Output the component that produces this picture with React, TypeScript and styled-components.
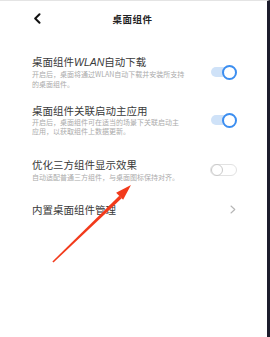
import React from 'react';
import styled, { createGlobalStyle } from 'styled-components';

const GlobalStyle = createGlobalStyle`
  html, body {
    margin: 0;
    padding: 0;
    background: #ffffff;
  }
  body {
    font-family: "Noto Sans CJK SC", "Noto Sans", sans-serif;
  }
`;

const Page = styled.div`
  position: relative;
  width: 270px;
  height: 337px;
  box-sizing: border-box;
  border-top: 1px solid #e4e4e4;
  border-right: 3px solid #1c1c2c;
  background: #fff;
  overflow: hidden;
`;

const Header = styled.div`
  display: flex;
  align-items: center;
  justify-content: center;
  position: relative;
  height: 35px;
`;

const BackButton = styled.div`
  position: absolute;
  left: 33px;
  top: 12px;
  width: 9px;
  height: 11px;
  display: flex;
`;

const HeaderTitle = styled.div`
  font-size: 9.5px;
  font-weight: 700;
  color: #222;
  letter-spacing: 0.5px;
  margin-right: 2px;
`;

const List = styled.div`
  display: flex;
  flex-direction: column;
  padding: 0 30px 0 32px;
`;

const Row = styled.div<{ $gap: number }>`
  display: flex;
  align-items: center;
  justify-content: space-between;
  margin-top: ${(p) => p.$gap}px;
`;

const TextCol = styled.div`
  display: flex;
  flex-direction: column;
`;

const Title = styled.div`
  font-size: 10.5px;
  line-height: 14px;
  color: #3a3a3a;
  letter-spacing: 0;
  white-space: nowrap;
`;

const Latin = styled.span`
  font-family: "Liberation Sans", "Noto Sans CJK SC", sans-serif;
  font-style: italic;
`;

const Sub = styled.div<{ $lh: number }>`
  font-size: 7px;
  line-height: ${(p) => p.$lh}px;
  color: #ababab;
  white-space: nowrap;
`;

const SwitchOn = styled.div`
  position: relative;
  width: 26px;
  height: 15px;
  flex: none;
  &::before {
    content: '';
    position: absolute;
    left: 0;
    top: 2.5px;
    width: 22px;
    height: 10px;
    border-radius: 5px;
    background: #cfe2f8;
  }
  &::after {
    content: '';
    position: absolute;
    right: 0;
    top: 0;
    width: 15px;
    height: 15px;
    box-sizing: border-box;
    border-radius: 50%;
    background: #fff;
    border: 2.2px solid #3c8ef0;
  }
`;

const SwitchOff = styled.div`
  position: relative;
  width: 27px;
  height: 12px;
  box-sizing: border-box;
  border: 1px solid #e2e2e2;
  border-radius: 6px;
  background: #fff;
  flex: none;
  &::after {
    content: '';
    position: absolute;
    left: 0;
    top: -1px;
    width: 12px;
    height: 12px;
    box-sizing: border-box;
    border-radius: 50%;
    background: #fff;
    border: 1.6px solid #c9c9c9;
  }
`;

const Chevron = styled.svg`
  width: 6px;
  height: 9px;
  flex: none;
  margin-right: 1px;
`;

const ArrowLayer = styled.svg`
  position: absolute;
  left: 0;
  top: 0;
  width: 270px;
  height: 337px;
  pointer-events: none;
`;

type Item = {
  title: React.ReactNode;
  key: string;
  lines?: string[];
  lh?: number;
  gap: number;
  control: 'on' | 'off' | 'link';
};

const items: Item[] = [
  {
    key: 'wlan',
    title: (
      <>
        桌面组件<Latin>WLAN</Latin>自动下载
      </>
    ),
    lines: ['开启后，桌面将通过WLAN自动下载并安装所支持', '的桌面组件。'],
    lh: 10,
    gap: 19,
    control: 'on',
  },
  {
    key: 'link',
    title: '桌面组件关联启动主应用',
    lines: ['开启后，桌面组件可在适当的场景下关联启动主', '应用，以获取组件上数据更新。'],
    lh: 9,
    gap: 15,
    control: 'on',
  },
  {
    key: 'third',
    title: '优化三方组件显示效果',
    lines: ['自动适配普通三方组件，与桌面图标保持对齐。'],
    lh: 10,
    gap: 22,
    control: 'off',
  },
  {
    key: 'manage',
    title: '内置桌面组件管理',
    gap: 20.5,
    control: 'link',
  },
];

const Control = ({ kind }: { kind: Item['control'] }) => {
  if (kind === 'on') return <SwitchOn />;
  if (kind === 'off') return <SwitchOff />;
  return (
    <Chevron viewBox="0 0 6 9">
      <path d="M1 1 L4.8 4.5 L1 8" fill="none" stroke="#b5b5b5" strokeWidth="1.1" strokeLinecap="round" strokeLinejoin="round" />
    </Chevron>
  );
};

export default function App() {
  return (
    <>
      <GlobalStyle />
      <Page>
        <Header>
          <BackButton>
            <svg width="9" height="11" viewBox="0 0 9 11">
              <path d="M6.5 1.2 L2.2 5.5 L6.5 9.8" fill="none" stroke="#111" strokeWidth="2" strokeLinecap="round" strokeLinejoin="round" />
            </svg>
          </BackButton>
          <HeaderTitle>桌面组件</HeaderTitle>
        </Header>
        <List>
          {items.map((it) => (
            <Row key={it.key} $gap={it.gap}>
              <TextCol>
                <Title>{it.title}</Title>
                {it.lines?.map((l) => (
                  <Sub key={l} $lh={it.lh ?? 10}>{l}</Sub>
                ))}
              </TextCol>
              <Control kind={it.control} />
            </Row>
          ))}
        </List>
        <ArrowLayer viewBox="0 0 270 337">
          <polygon
            points="53.5,261.5 52.4,260.4 119.3,194.8 121.7,197.2"
            fill="#f23a1b"
          />
          <polygon points="131,184 123.1,198.8 116.1,191.7" fill="#f23a1b" />
        </ArrowLayer>
      </Page>
    </>
  );
}
